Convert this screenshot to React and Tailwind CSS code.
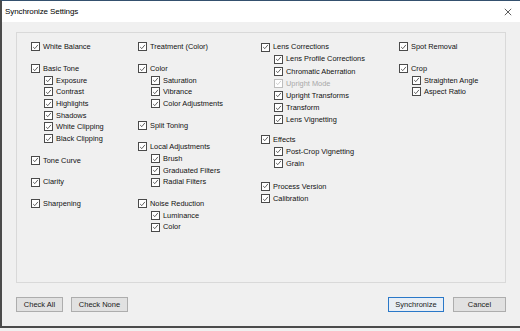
import React from "react";

// --- DATA: the four columns of the dialog ---
const columns = [
  {
    width: "w-[107px]",
    row: "h-[11.7px]",
    gap: "gap-[10px]",
    groups: [
      { label: "White Balance" },
      {
        label: "Basic Tone",
        items: ["Exposure", "Contrast", "Highlights", "Shadows", "White Clipping", "Black Clipping"],
      },
      { label: "Tone Curve" },
      { label: "Clarity" },
      { label: "Sharpening" },
    ],
  },
  {
    width: "w-[123px]",
    row: "h-[11.7px]",
    gap: "gap-[10px]",
    groups: [
      { label: "Treatment (Color)" },
      { label: "Color", items: ["Saturation", "Vibrance", "Color Adjustments"] },
      { label: "Split Toning" },
      { label: "Local Adjustments", items: ["Brush", "Graduated Filters", "Radial Filters"] },
      { label: "Noise Reduction", items: ["Luminance", "Color"] },
    ],
  },
  {
    width: "w-[138px]",
    row: "h-[12.1px]",
    gap: "gap-[7.5px]",
    groups: [
      {
        label: "Lens Corrections",
        items: [
          "Lens Profile Corrections",
          "Chromatic Aberration",
          { label: "Upright Mode", disabled: true },
          "Upright Transforms",
          "Transform",
          "Lens Vignetting",
        ],
      },
      { label: "Effects", items: ["Post-Crop Vignetting", "Grain"] },
      { label: "Process Version", extra: "mt-[3.5px]" },
      { label: "Calibration", extra: "-mt-[7.5px]" },
    ],
  },
  {
    width: "w-[100px]",
    row: "h-[11.7px]",
    gap: "gap-[10px]",
    groups: [
      { label: "Spot Removal" },
      { label: "Crop", items: ["Straighten Angle", "Aspect Ratio"] },
    ],
  },
];

const Check = ({ label, disabled, row }) => (
  <div className={`flex items-center gap-[3px] ${row}`}>
    <span
      className={`w-[9px] h-[9px] border bg-white flex items-center justify-center shrink-0 ${
        disabled ? "border-[#bdbdbd]" : "border-[#4a4a4a]"
      }`}
    >
      <svg viewBox="0 0 9 9" className="w-[8px] h-[8px]">
        <path
          d="M1.5 4.6 L3.6 6.6 L7.6 1.8"
          fill="none"
          stroke={disabled ? "#bdbdbd" : "#333"}
          strokeWidth="1"
        />
      </svg>
    </span>
    <span className={`whitespace-nowrap leading-none ${disabled ? "text-[#a8a8a8]" : "text-[#111]"}`}>
      {label}
    </span>
  </div>
);

const Button = ({ children, primary, width }) => (
  <button
    className={`${width} h-[15px] text-[7.5px] leading-none text-[#1a1a1a] ${
      primary ? "border border-[#2a78c8] bg-[#e8eef5]" : "border border-[#adadad] bg-[#e1e1e1]"
    }`}
  >
    {children}
  </button>
);

export default function App() {
  return (
    <div
      className="w-[520px] h-[331px] bg-[#f0f0f0] overflow-hidden"
      style={{ fontFamily: '"Liberation Sans", Arial, sans-serif' }}
    >
      <div className="h-[328px] border-l-2 border-b-2 border-[#4b4b4b] border-t border-t-[#34506e] flex flex-col">
        {/* Title bar */}
        <div className="h-[21px] bg-white flex items-center justify-between pl-[3px] pr-[8px] shrink-0">
          <span className="text-[8px] text-black tracking-[-0.1px]">Synchronize Settings</span>
          <svg viewBox="0 0 10 10" className="w-[8px] h-[8px]">
            <path d="M1 1 L9 9 M9 1 L1 9" stroke="#333" strokeWidth="1" />
          </svg>
        </div>

        {/* Group box */}
        <div className="mx-[14px] mt-[10px] h-[251px] border border-[#d9d9d9] flex pt-[8px] pl-[14px] text-[7.4px]">
          {columns.map((col, ci) => (
            <div key={ci} className={`${col.width} flex flex-col ${col.gap} shrink-0`}>
              {col.groups.map((g, gi) => (
                <div key={gi} className={`flex flex-col ${g.extra || ""}`}>
                  <Check label={g.label} row={col.row} />
                  {g.items && (
                    <div className="pl-[13px] flex flex-col">
                      {g.items.map((it, ii) =>
                        typeof it === "string" ? (
                          <Check key={ii} label={it} row={col.row} />
                        ) : (
                          <Check key={ii} label={it.label} disabled={it.disabled} row={col.row} />
                        )
                      )}
                    </div>
                  )}
                </div>
              ))}
            </div>
          ))}
        </div>

        {/* Buttons */}
        <div className="flex items-center px-[14px] mt-[14px]">
          <div className="flex gap-[8px]">
            <Button width="w-[47px]">Check All</Button>
            <Button width="w-[57px]">Check None</Button>
          </div>
          <div className="flex gap-[9px] ml-auto">
            <Button width="w-[56px]" primary>
              Synchronize
            </Button>
            <Button width="w-[53px]">Cancel</Button>
          </div>
        </div>
      </div>
    </div>
  );
}
